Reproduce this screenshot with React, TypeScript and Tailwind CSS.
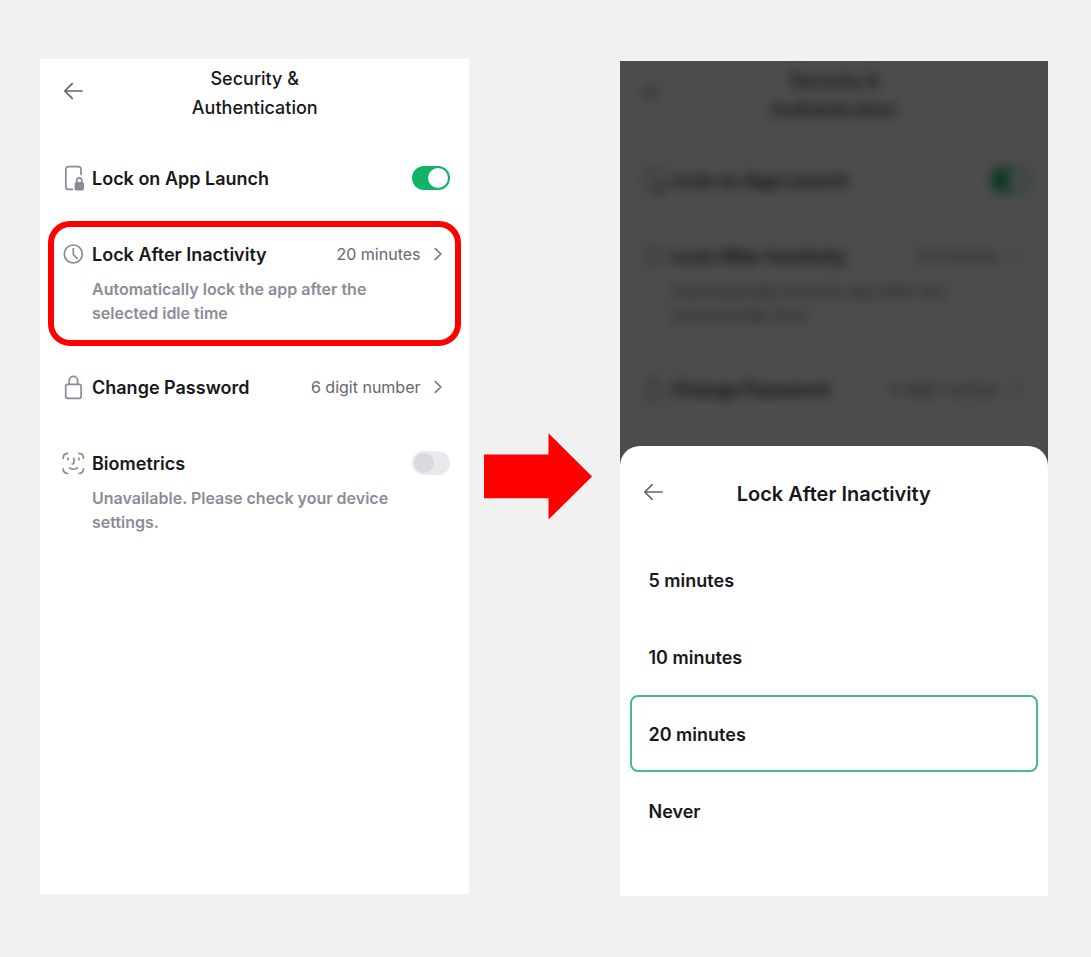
import { useId, useState, type ReactNode } from "react";

function BackArrowIcon() {
  return (
    <svg width="20" height="20" viewBox="0 0 20 20" fill="none" stroke="#63636e" strokeWidth="1.7" strokeLinecap="round" strokeLinejoin="round" aria-hidden="true">
      <path d="M9.2 2.6 1.8 10l7.4 7.4M1.8 10H19" />
    </svg>
  );
}

function PhoneLockIcon() {
  return (
    <svg width="26" height="28" viewBox="0 0 26 28" fill="none" stroke="#898a95" strokeWidth="1.7" strokeLinecap="round" aria-hidden="true">
      <path d="M21 10.5V5.2a2.5 2.5 0 0 0-2.5-2.5H8.3a2.5 2.5 0 0 0-2.5 2.5v17.6a2.5 2.5 0 0 0 2.5 2.5h4.2" />
      <path d="M16.8 18.500v-2.2a2.5 2.5 0 0 1 5 0v2.2" />
      <rect x="14.6" y="18" width="9.4" height="8.6" rx="1.8" fill="#898a95" stroke="none" />
    </svg>
  );
}

function ClockIcon() {
  return (
    <svg width="26" height="28" viewBox="0 0 26 28" fill="none" stroke="#898a95" strokeWidth="1.7" strokeLinecap="round" strokeLinejoin="round" aria-hidden="true">
      <circle cx="13.3" cy="14" r="9" />
      <path d="M13.3 8.6v6l3.8 3.8" />
    </svg>
  );
}

function PadlockIcon() {
  return (
    <svg width="26" height="28" viewBox="0 0 26 28" fill="none" stroke="#898a95" strokeWidth="1.7" strokeLinecap="round" aria-hidden="true">
      <rect x="5.7" y="11.3" width="15.4" height="14" rx="1.8" />
      <path d="M9.2 11.3V7.6a4.2 4.2 0 0 1 8.4 0v3.7" />
    </svg>
  );
}

function FaceIcon() {
  return (
    <svg width="26" height="28" viewBox="0 0 26 28" fill="none" stroke="#898a95" strokeWidth="1.7" strokeLinecap="round" strokeLinejoin="round" aria-hidden="true">
      <path d="M3.2 9.2C3.2 6.2 4.6 4.5 7.6 4.4M19 4.4c3 .1 4.4 1.8 4.4 4.8M23.4 19.8c0 3-1.4 4.6-4.4 4.7M7.6 24.5c-3-.1-4.4-1.7-4.4-4.7" />
      <path d="M8 9.2v1.6M18.9 9.2v1.6M13.9 9.2v4.4c0 1-.5 1.5-1.7 1.5M9.6 18.9c2.3 1.6 5.5 1.6 7.8 0" />
    </svg>
  );
}

function ChevronIcon() {
  return (
    <svg width="24" height="24" viewBox="0 0 24 24" fill="none" stroke="#777883" strokeWidth="1.7" strokeLinecap="round" strokeLinejoin="round" aria-hidden="true">
      <path d="m9.3 6.700 5.6 5.3-5.6 5.3" />
    </svg>
  );
}

interface SwitchProps {
  id: string;
  checked?: boolean;
  disabled?: boolean;
  onChange?: (checked: boolean) => void;
}

function Switch({ id, checked = false, disabled = false, onChange }: SwitchProps) {
  return (
    <input
      id={id}
      type="checkbox"
      role="switch"
      checked={checked}
      disabled={disabled}
      onChange={(event) => onChange?.(event.target.checked)}
      className="flex h-6 w-[38px] shrink-0 appearance-none items-center rounded-full bg-[#e9eaee] px-0.5 before:size-5 before:rounded-full before:bg-[#d9dade] checked:justify-end checked:bg-[#11b364] checked:before:bg-white"
    />
  );
}

interface RowProps {
  icon: ReactNode;
  description?: string;
  highlighted?: boolean;
  children: ReactNode;
}

function Row({ icon, description, highlighted = false, children }: RowProps) {
  return (
    <li className="relative flex gap-1.5">
      <span className="h-7 w-[26px] shrink-0">{icon}</span>
      <div className="min-w-0 flex-1">
        {children}
        {description && (
          <p className="mt-[9px] max-w-[310px] text-base font-semibold text-[#8b8c97]">{description}</p>
        )}
      </div>
      {highlighted && (
        <span className="pointer-events-none absolute -top-[19px] -right-[11px] -bottom-[21px] -left-3 rounded-[22px] border-6 border-[#ff0000]" />
      )}
    </li>
  );
}

function LinkRow({ label, value }: { label: string; value: string }) {
  return (
    <button type="button" className="flex h-7 w-full items-center justify-between text-left">
      <span className="pt-0.5 text-lg leading-6 font-semibold">{label}</span>
      <span className="flex items-center gap-[5px] text-base text-[#66676f]">
        {value}
        <ChevronIcon />
      </span>
    </button>
  );
}

interface SecurityScreenProps {
  highlight?: boolean;
  showBiometrics?: boolean;
}

function SecurityScreen({ highlight = false, showBiometrics = false }: SecurityScreenProps) {
  const id = useId();
  const [lockOnLaunch, setLockOnLaunch] = useState(true);
  return (
    <div className="pt-[5px] pr-[19px] pl-5">
      <header className="grid grid-cols-[26px_1fr_26px]">
        <button type="button" aria-label="Back" className="flex h-[54px] items-center justify-center">
          <BackArrowIcon />
        </button>
        <h1 className="text-center text-lg leading-[29px] font-medium">
          Security &amp;
          <br />
          Authentication
        </h1>
      </header>
      <ul className="mt-[42px] flex flex-col gap-12">
        <Row icon={<PhoneLockIcon />}>
          <div className="flex h-7 items-center justify-between">
            <label htmlFor={`${id}-launch`} className="pt-0.5 text-lg leading-6 font-semibold">
              Lock on App Launch
            </label>
            <Switch id={`${id}-launch`} checked={lockOnLaunch} onChange={setLockOnLaunch} />
          </div>
        </Row>
        <Row
          icon={<ClockIcon />}
          description="Automatically lock the app after the selected idle time"
          highlighted={highlight}
        >
          <LinkRow label="Lock After Inactivity" value="20 minutes" />
        </Row>
        <Row icon={<PadlockIcon />}>
          <LinkRow label="Change Password" value="6 digit number" />
        </Row>
        {showBiometrics && (
          <Row icon={<FaceIcon />} description="Unavailable. Please check your device settings.">
            <div className="flex h-7 items-center justify-between">
              <label htmlFor={`${id}-biometrics`} className="pt-0.5 text-lg leading-6 font-semibold">
                Biometrics
              </label>
              <Switch id={`${id}-biometrics`} disabled />
            </div>
          </Row>
        )}
      </ul>
    </div>
  );
}

const OPTIONS = ["5 minutes", "10 minutes", "20 minutes", "Never"];

function InactivitySheet() {
  const titleId = useId();
  const [selected, setSelected] = useState("20 minutes");
  return (
    <section className="relative rounded-t-[20px] bg-white px-2.5 pt-8 pb-[47px]">
      <header className="grid h-8 grid-cols-[46px_1fr_46px] items-center">
        <button type="button" aria-label="Back" className="flex h-7 items-center justify-center self-start">
          <BackArrowIcon />
        </button>
        <h2 id={titleId} className="text-center text-xl leading-7 font-semibold">
          Lock After Inactivity
        </h2>
      </header>
      <div role="radiogroup" aria-labelledby={titleId} className="mt-[31px]">
        {OPTIONS.map((option) => (
          <label
            key={option}
            className="flex h-[77px] items-center rounded-lg border-2 border-transparent px-[17px] pt-0.5 text-lg font-semibold has-checked:border-[#45bb85]"
          >
            <input
              type="radio"
              name="inactivity"
              value={option}
              checked={selected === option}
              onChange={() => setSelected(option)}
              className="sr-only"
            />
            {option}
          </label>
        ))}
      </div>
    </section>
  );
}

export default function App() {
  return (
    <main className="flex min-h-screen bg-[#f1f1f1] pt-[59px] pr-[43px] pb-[61px] pl-10 font-['Inter',sans-serif] text-[#18181b]">
      <section className="mb-0.5 min-w-0 flex-1 bg-white">
        <SecurityScreen highlight showBiometrics />
      </section>
      <div className="flex w-[151px] shrink-0 items-center pb-0.5 pl-[15px]">
        <svg width="108" height="87" viewBox="0 0 108 87" fill="#ff0000" aria-hidden="true">
          <path d="M0 21.5h64.5V.3L108 43.4 64.5 86.6V65.3H0Z" />
        </svg>
      </div>
      <section className="relative mt-0.5 flex min-w-0 flex-1 flex-col justify-end overflow-hidden bg-[#fffff8]">
        <div inert aria-hidden="true" className="absolute inset-0 blur-[6px]">
          <SecurityScreen />
        </div>
        <div className="absolute inset-0 bg-black/70" />
        <InactivitySheet />
      </section>
    </main>
  );
}
